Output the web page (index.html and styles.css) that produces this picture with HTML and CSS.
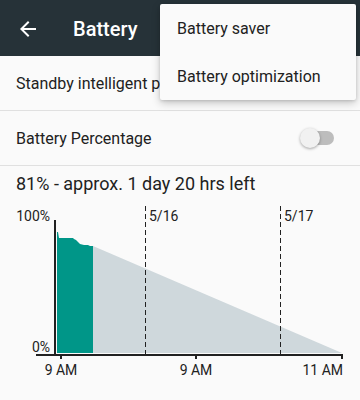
FILE: index.html
```html
<!DOCTYPE html>
<html>
<head>
<meta charset="utf-8">
<link rel="stylesheet" href="styles.css">
</head>
<body>
<header class="toolbar">
  <svg class="back" width="24" height="24" viewBox="0 0 24 24"><path d="M20 11H7.83l5.59-5.59L12 4l-8 8 8 8 1.41-1.41L7.83 13H20v-2z" fill="#fff"/></svg>
  <span class="title">Battery</span>
</header>
<div class="row"><span class="label">Standby intelligent p</span></div>
<div class="row">
  <span class="label">Battery Percentage</span>
  <span class="switch"><span class="track"></span><span class="thumb"></span></span>
</div>
<div class="status">81% - approx. 1 day 20 hrs left</div>
<svg class="chart" width="360" height="200" viewBox="0 0 360 200">
  <polygon class="proj" points="93,45 342,152 93,152"/>
  <polygon class="used" points="57,152 57,31 58,31 59,37 73,37 74,38 76,39 77,40 78,41 80,43 84,44 88,44 90,45 93,45 93,152"/>
  <line class="dash" x1="145.5" y1="5" x2="145.5" y2="153"/>
  <line class="dash" x1="280.5" y1="5" x2="280.5" y2="153"/>
  <rect class="axis" x="54" y="19" width="2" height="136"/>
  <rect class="axis" x="36" y="153" width="307" height="2"/>
  <rect class="axis" x="60" y="155" width="2" height="3"/>
  <rect class="axis" x="195" y="155" width="2" height="3"/>
  <rect class="axis" x="341" y="155" width="2" height="3"/>
  <text class="lbl" x="50" y="20" text-anchor="end">100%</text>
  <text class="lbl" x="50" y="151" text-anchor="end">0%</text>
  <text class="lbl" x="149" y="20">5/16</text>
  <text class="lbl" x="284" y="20">5/17</text>
  <text class="lbl" x="61" y="174" text-anchor="middle">9 AM</text>
  <text class="lbl" x="196" y="174" text-anchor="middle">9 AM</text>
  <text class="lbl" x="343" y="174" text-anchor="end">11 AM</text>
</svg>
<div class="menu">
  <div class="item">Battery saver</div>
  <div class="item">Battery optimization</div>
</div>
</body>
</html>
```
FILE: styles.css
```css
html, body {
  margin: 0;
  padding: 0;
  background: #fafafa;
  font-family: Roboto, "Noto Sans", sans-serif;
  color: #212121;
  width: 360px;
  height: 400px;
  overflow: hidden;
  position: relative;
}
.toolbar {
  height: 56px;
  background: #263238;
  display: flex;
  align-items: center;
  padding-left: 16px;
  box-sizing: border-box;
}
.back {
  display: block;
  margin-top: 2px;
}
.title {
  color: #fff;
  font-size: 20px;
  font-weight: 500;
  margin-left: 33px;
  margin-top: 2px;
}
.row {
  height: 55px;
  box-sizing: border-box;
  border-bottom: 1px solid #e0e0e0;
  display: flex;
  align-items: center;
  justify-content: space-between;
  padding: 0 16px;
  font-size: 16px;
  white-space: nowrap;
  overflow: hidden;
}
.label {
  margin-top: 1px;
}
.switch {
  position: relative;
  width: 34px;
  height: 20px;
  margin-right: 10px;
  flex: none;
}
.track {
  position: absolute;
  left: 1px;
  top: 3px;
  width: 33px;
  height: 14px;
  border-radius: 7px;
  background: #bdbdbd;
}
.thumb {
  position: absolute;
  left: 0;
  top: 0;
  width: 20px;
  height: 20px;
  border-radius: 50%;
  background: #f1f1f1;
  box-shadow: 0 1px 3px rgba(0,0,0,0.35);
}
.status {
  height: 35px;
  box-sizing: border-box;
  padding: 5px 16px 0;
  line-height: 26px;
  font-size: 18px;
}
.chart {
  display: block;
}
.proj { fill: #cfd8dc; }
.used { fill: #009688; }
.axis { fill: #212121; }
.dash {
  stroke: #212121;
  stroke-width: 1;
  stroke-dasharray: 5 3;
}
.lbl {
  font-family: Roboto, sans-serif;
  font-size: 14px;
  fill: #212121;
}
.menu {
  position: absolute;
  top: 4px;
  right: 4px;
  width: 196px;
  background: #fafafa;
  border-radius: 2px;
  box-shadow: 0 3px 8px rgba(0,0,0,0.22), 0 1px 3px rgba(0,0,0,0.12);
}
.item {
  height: 46px;
  padding: 2px 17px 0;
  line-height: 46px;
  font-size: 16px;
  color: #212121;
}
```
